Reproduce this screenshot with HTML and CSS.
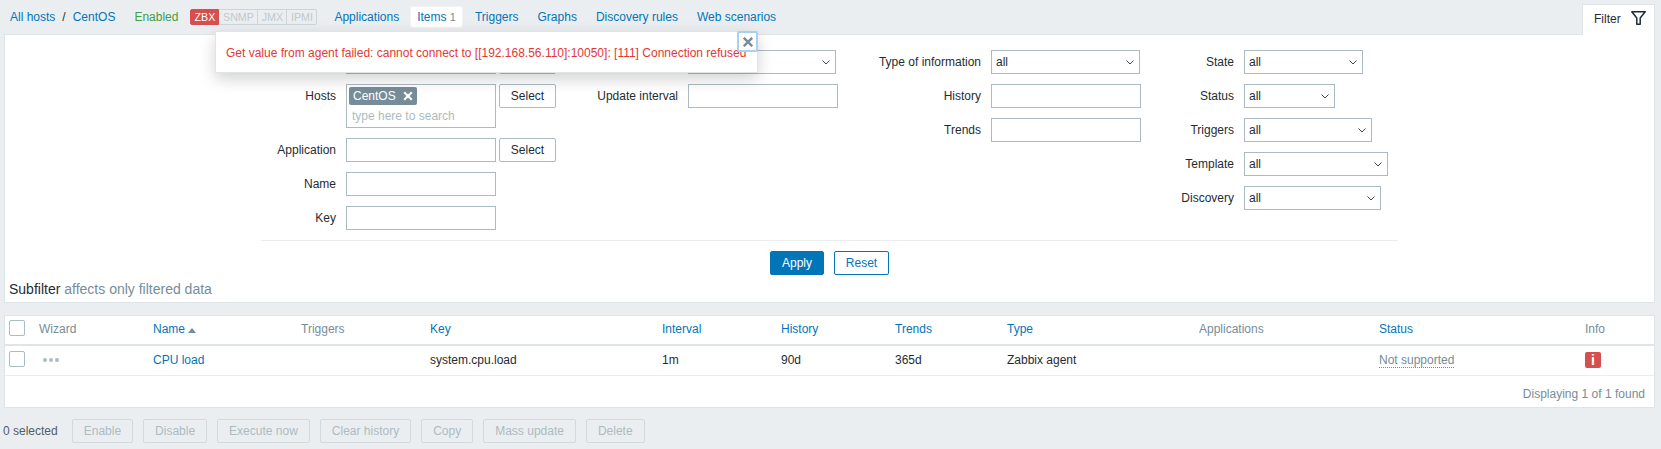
FILE: index.html
```html
<!DOCTYPE html>
<html lang="en">
<head>
<meta charset="utf-8">
<title>Items</title>
<link rel="stylesheet" href="styles.css">
</head>
<body>
<header class="topbar">
  <nav class="crumbs"><a href="#">All hosts</a><span class="sep">/</span><a href="#">CentOS</a></nav>
  <span class="enabled">Enabled</span>
  <div class="avail"><span class="tag on">ZBX</span><span class="tag">SNMP</span><span class="tag">JMX</span><span class="tag">IPMI</span></div>
  <nav class="tabs">
    <a href="#">Applications</a>
    <a href="#" class="current">Items <sup class="count">1</sup></a>
    <a href="#">Triggers</a>
    <a href="#">Graphs</a>
    <a href="#">Discovery rules</a>
    <a href="#">Web scenarios</a>
  </nav>
  <div class="filter-tab">Filter
    <svg class="funnel" width="15" height="14" viewBox="0 0 15 14"><path d="M.8.8h13.4L9.2 7v6.2H5.8V7z" fill="#fff" stroke="#1f2c33" stroke-width="1.5" stroke-linejoin="round"/></svg>
  </div>
</header>

<section class="panel">
  <form class="filter">
    <div class="fcol c1">
      <label aria-label="Host groups"></label><div class="with-btn"><input class="w150" type="text"><button type="button" class="btn" aria-label="Select"></button></div>
      <label>Hosts</label><div class="with-btn top">
        <div class="multi"><span class="chip">CentOS <svg width="10" height="10" viewBox="0 0 10 10"><path d="M1.2 1.2l7.6 7.6m0-7.6l-7.6 7.6" stroke="#fff" stroke-width="2.2"/></svg></span><input class="search" placeholder="type here to search"></div>
        <button type="button" class="btn">Select</button></div>
      <label>Application</label><div class="with-btn"><input class="w150" type="text"><button type="button" class="btn">Select</button></div>
      <label>Name</label><div><input class="w150" type="text"></div>
      <label>Key</label><div><input class="w150" type="text"></div>
    </div>
    <div class="fcol c2">
      <label aria-label="Type"></label><div><select class="s147" aria-label="Type"><option></option></select></div>
      <label>Update interval</label><div><input class="w150" type="text"></div>
    </div>
    <div class="fcol c3">
      <label>Type of information</label><div><select class="s148"><option>all</option></select></div>
      <label>History</label><div><input class="w150" type="text"></div>
      <label>Trends</label><div><input class="w150" type="text"></div>
    </div>
    <div class="fcol c4">
      <label>State</label><div><select class="s119"><option>all</option></select></div>
      <label>Status</label><div><select class="s91"><option>all</option></select></div>
      <label>Triggers</label><div><select class="s128"><option>all</option></select></div>
      <label>Template</label><div><select class="s145"><option>all</option></select></div>
      <label>Discovery</label><div><select class="s137"><option>all</option></select></div>
    </div>
  </form>
  <div class="actions"><button type="button" class="btn primary">Apply</button><button type="button" class="btn outline">Reset</button></div>
  <p class="subfilter">Subfilter <span>affects only filtered data</span></p>
</section>

<section class="card">
  <table class="items">
    <colgroup>
      <col class="k0"><col class="k1"><col class="k2"><col class="k3"><col class="k4"><col class="k5"><col class="k6"><col class="k7"><col class="k8"><col class="k9"><col class="k10"><col>
    </colgroup>
    <thead>
      <tr>
        <th class="first"><span class="check"></span></th>
        <th class="muted">Wizard</th>
        <th><a href="#">Name</a><span class="sort"></span></th>
        <th class="muted">Triggers</th>
        <th><a href="#">Key</a></th>
        <th><a href="#">Interval</a></th>
        <th><a href="#">History</a></th>
        <th><a href="#">Trends</a></th>
        <th><a href="#">Type</a></th>
        <th class="muted">Applications</th>
        <th><a href="#">Status</a></th>
        <th class="muted">Info</th>
      </tr>
    </thead>
    <tbody>
      <tr>
        <td class="first"><span class="check"></span></td>
        <td><svg class="dots" width="16" height="4" viewBox="0 0 16 4"><circle cx="2" cy="2" r="2"/><circle cx="8" cy="2" r="2"/><circle cx="14" cy="2" r="2"/></svg></td>
        <td><a href="#">CPU load</a></td>
        <td></td>
        <td>system.cpu.load</td>
        <td>1m</td>
        <td>90d</td>
        <td>365d</td>
        <td>Zabbix agent</td>
        <td></td>
        <td><span class="unsupported">Not supported</span></td>
        <td><span class="info">i</span></td>
      </tr>
    </tbody>
  </table>
  <div class="found">Displaying <span>1</span> of <span>1</span> found</div>
</section>

<footer class="bulk">
  <span class="selected">0 selected</span>
  <button type="button" class="btn off" disabled>Enable</button>
  <button type="button" class="btn off" disabled>Disable</button>
  <button type="button" class="btn off" disabled>Execute now</button>
  <button type="button" class="btn off" disabled>Clear history</button>
  <button type="button" class="btn off" disabled>Copy</button>
  <button type="button" class="btn off" disabled>Mass update</button>
  <button type="button" class="btn off" disabled>Delete</button>
</footer>

<div class="message" role="alert">
  <span>Get value from agent failed: cannot connect to [[192.168.56.110]:10050]: [111] Connection refused</span>
  <button type="button" class="close" aria-label="Close"><svg width="10" height="10" viewBox="0 0 10 10"><path d="M.8.8l8.4 8.4m0-8.4L.8 9.200" stroke="#768d99" stroke-width="2.4"/></svg></button>
</div>
</body>
</html>
```
FILE: styles.css
```css
* { box-sizing: border-box; }
html, body { height: 100%; }
body {
  margin: 0;
  background: #ebeef0;
  color: #1f2c33;
  font: 12px/14px "Liberation Sans", Arial, sans-serif;
  overflow: hidden;
}
a { color: #0275b8; text-decoration: none; }

.topbar {
  display: flex;
  align-items: center;
  height: 34px;
  padding: 0 5px 0 10px;
}
.crumbs .sep { margin: 0 7px; }
.enabled { margin-left: 19px; color: #429e47; }
.avail {
  display: flex;
  margin-left: 12px;
  height: 16px;
}
.tag {
  width: 30px;
  height: 16px;
  border: 1px solid #ccd5d9;
  border-left-width: 0;
  color: #bfc9ce;
  font-size: 10.67px;
  line-height: 14px;
  text-align: center;
}
.tag:nth-child(2) { width: 39px; }
.tag:nth-child(3) { width: 29px; }
.tag:nth-child(4) { border-radius: 0 2px 2px 0; }
.tag.on {
  width: 29px;
  background: #d64e4e;
  border: 1px solid #d64e4e;
  border-radius: 2px 0 0 2px;
  color: #fff;
}
.tabs { display: flex; align-items: center; gap: 7px; margin-left: 11px; }
.tabs a { height: 20px; padding: 3px 6px; white-space: nowrap; }
.tabs a.current {
  margin-left: -1px;
  background: #fff;
  border-radius: 2px;
  box-shadow: 0 0 0 1px #f1f3f4;
  color: #0275b8;
}
.count { font-size: 11px; color: #768d99; vertical-align: baseline; line-height: 0; }
.filter-tab {
  display: flex;
  align-items: center;
  align-self: flex-end;
  gap: 11px;
  height: 31px;
  margin-left: auto;
  margin-right: 1px;
  padding: 0 10px 3px 11px;
  width: 73px;
  background: #fff;
  border: 1px solid #dfe4e7;
  border-bottom: 0;
  position: relative;
  z-index: 1;
  margin-bottom: -1px;
}
.funnel { flex: none; margin-top: -2px; margin-left: -1px; }

.panel {
  height: 269px;
  margin: 0 6px 0 4px;
  background: #fff;
  border: 1px solid #dfe4e7;
}
.filter {
  display: flex;
  height: 206px;
  margin: 0 256px;
  padding-top: 15px;
  border-bottom: 1px solid #ebeef0;
  align-items: flex-start;
}
.fcol {
  display: grid;
  column-gap: 10px;
  row-gap: 10px;
  align-items: start;
}
.fcol label { text-align: right; line-height: 24px; height: 24px; white-space: nowrap; }
.c1 { width: 298px; grid-template-columns: 75px auto; }
.c2 { width: 286px; grid-template-columns: 119px auto; }
.c3 { width: 301px; grid-template-columns: 136px auto; }
.c4 { grid-template-columns: 88px auto; }
input, select, .btn { font: inherit; margin: 0; }
input[type="text"], select {
  display: block;
  height: 24px;
  padding: 0 4px;
  border: 1px solid #acbbc2;
  border-radius: 0;
  background: #fff;
  color: #1f2c33;
  outline: 0;
}
select {
  appearance: none;
  padding: 0 16px 0 4px;
  background: #fff url("data:image/svg+xml,%3Csvg xmlns='http://www.w3.org/2000/svg' width='8' height='5' viewBox='0 0 8 5'%3E%3Cpath d='M.5.5L4 4 7.500.5' fill='none' stroke='%233a474e' stroke-width='1'/%3E%3C/svg%3E") no-repeat right 5px center;
}
.w150 { width: 150px; }
.s147 { width: 148px; }
.s148 { width: 149px; }
.s119 { width: 119px; }
.s91 { width: 91px; }
.s128 { width: 128px; }
.s145 { width: 144px; }
.s137 { width: 137px; }
.with-btn { display: flex; gap: 3px; align-items: flex-start; width: 210px; }
.multi {
  width: 150px;
  height: 44px;
  padding: 2px;
  border: 1px solid #acbbc2;
}
.chip {
  display: flex;
  width: 68px;
  height: 18px;
  align-items: center;
  gap: 7px;
  padding: 0 4px;
  background: #768d99;
  border-radius: 2px;
  color: #fff;
}
.search {
  display: block;
  width: 100%;
  height: 20px;
  margin-top: 1px;
  padding: 0 3px;
  border: 0;
  outline: 0;
  background: transparent;
}
.search::placeholder { color: #acbbc2; opacity: 1; }
.btn {
  height: 24px;
  padding: 0 11px;
  border: 1px solid #acbbc2;
  border-radius: 2px;
  background: #fff;
  color: #1f2c33;
}
.with-btn .btn { width: 57px; padding: 0; }
.actions {
  display: flex;
  justify-content: center;
  gap: 10px;
  padding-top: 10px;
}
.btn.primary { width: 54px; padding: 0; background: #0275b8; border-color: #0275b8; color: #fff; }
.btn.outline { width: 55px; padding: 0; color: #0275b8; border-color: #0275b8; }
.subfilter {
  margin: 0;
  padding: 7px 4px 0;
  font-size: 14px;
  line-height: 14px;
}
.subfilter span { color: #768d99; }

.card {
  height: 93px;
  margin: 12px 6px 0 4px;
  background: #fff;
  border: 1px solid #dfe4e7;
}
.items {
  width: 100%;
  table-layout: fixed;
  border-collapse: collapse;
}
.k0 { width: 29px; }
.k1 { width: 114px; }
.k2 { width: 148px; }
.k3 { width: 129px; }
.k4 { width: 232px; }
.k5 { width: 119px; }
.k6 { width: 114px; }
.k7 { width: 112px; }
.k8 { width: 192px; }
.k9 { width: 180px; }
.k10 { width: 206px; }
.items th, .items td {
  padding: 0 0 0 5px;
  text-align: left;
  font-weight: 400;
  white-space: nowrap;
}
.items th { height: 29px; border-bottom: 2px solid #dfe4e7; padding-bottom: 2px; }
.items td { height: 30px; border-bottom: 1px solid #ebeef0; }
.items .first { padding-left: 4px; }
.items .muted { color: #768d99; }
.check {
  display: block;
  width: 16px;
  height: 16px;
  margin-bottom: 2px;
  border: 1px solid #acbbc2;
  border-radius: 2px;
  background: #fff;
}
.sort {
  display: inline-block;
  margin-left: 3px;
  border: 4px solid transparent;
  border-top: 0;
  border-bottom: 5px solid #768d99;
}
.dots { display: block; margin-left: 4px; fill: #acbbc2; }
.unsupported { color: #768d99; border-bottom: 1px dotted #768d99; display: inline-block; }
.info {
  display: block;
  width: 16px;
  height: 16px;
  border-radius: 2px;
  background: #d64e4e;
  color: #fff;
  font-weight: 700;
  font-size: 14px;
  line-height: 16px;
  text-align: center;
}
.found {
  padding: 11px 9px 0 0;
  text-align: right;
  color: #768d99;
}

.bulk {
  display: flex;
  align-items: center;
  gap: 10px;
  margin-top: 11px;
  padding-left: 3px;
}
.selected { color: #4f5f68; margin-right: 4px; }
.btn.off {
  background: #ebeef0;
  border-color: #d3dade;
  color: #acbbc2;
}

.message {
  position: absolute;
  left: 215px;
  top: 31px;
  width: 543px;
  height: 42px;
  padding: 14px 10px 0;
  background: #fff;
  border: 1px solid #dfe4e7;
  color: #e33734;
  white-space: nowrap;
  box-shadow: 0 6px 16px rgba(0, 0, 0, .18);
  z-index: 5;
}
.close {
  position: absolute;
  top: -1px;
  right: -1px;
  display: flex;
  align-items: center;
  justify-content: center;
  width: 21px;
  height: 21px;
  padding: 0;
  background: #fff;
  border: 2px solid #a9d0f0;
  border-radius: 2px;
}
```
